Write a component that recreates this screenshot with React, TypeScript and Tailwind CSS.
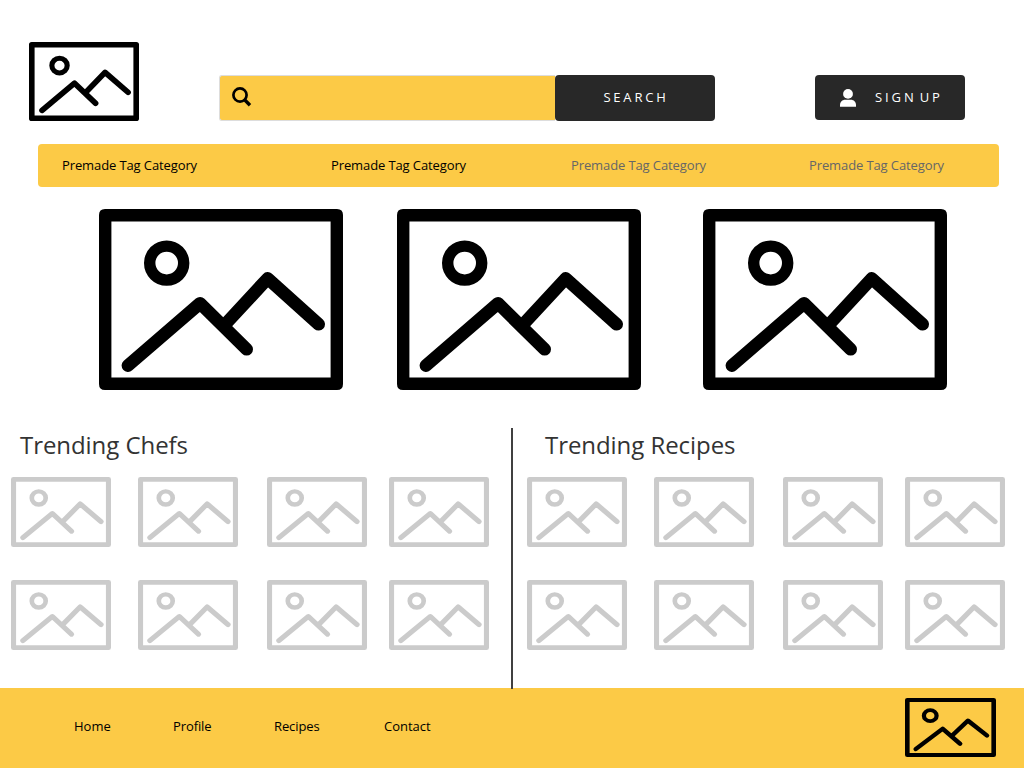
import React from "react";

function Picture({ className }: { className: string }) {
  return (
    <svg
      viewBox="0 0 244 181"
      preserveAspectRatio="none"
      fill="none"
      stroke="currentColor"
      className={className}
    >
      <path
        fill="currentColor"
        stroke="none"
        fillRule="evenodd"
        d="M6 0H238Q244 0 244 6V175Q244 181 238 181H6Q0 181 0 175V6Q0 0 6 0ZM12.4 12.6V168.4H231.6V12.6Z"
      />
      <circle cx="67.7" cy="54.1" r="17" strokeWidth="11.4" />
      <path
        d="M29 156.5L101 94.3L147.6 140.2M127 114.5L168.7 69.5L219.6 115.2"
        strokeWidth="12.8"
        strokeLinecap="round"
        strokeLinejoin="round"
      />
    </svg>
  );
}

function SearchIcon() {
  return (
    <svg viewBox="0 0 20 20" className="h-5 w-5" fill="none" stroke="#000">
      <circle cx="8" cy="8" r="6.6" strokeWidth="2.7" />
      <path d="M12.6 12.8L18 18.2" strokeWidth="3.4" />
    </svg>
  );
}

function UserIcon() {
  return (
    <svg viewBox="0 0 16 18" className="h-[18px] w-4" fill="#fff">
      <circle cx="8" cy="4.9" r="4.9" />
      <path d="M0 17.8V16.2C0 12.9 2.2 10.8 5.2 10.8H10.8C13.8 10.8 16 12.9 16 16.2V17.8Z" />
    </svg>
  );
}

function Trending({ title, className, titleClass }: { title: string; className: string; titleClass: string }) {
  return (
    <section className={className}>
      <h2 className={titleClass}>{title}</h2>
      <div className="mt-4 grid grid-cols-[127px_129px_122px_100px] gap-y-[33px] text-[#cbcbcb]">
        {Array.from({ length: 8 }, (_, i) => (
          <Picture key={i} className="h-[70px] w-[100px]" />
        ))}
      </div>
    </section>
  );
}

export default function App() {
  return (
    <div className="flex h-[768px] w-[1024px] flex-col overflow-hidden bg-white font-['Open_Sans',sans-serif] text-[13px] text-black">
      <header className="flex h-36 shrink-0 items-start">
        <Picture className="mt-[42px] ml-[29px] h-[79px] w-[110px]" />
        <div className="mt-[75px] ml-20 flex h-[46px]">
          <label className="flex w-[336px] items-start rounded-l-[3px] border border-r-0 border-[#dddddd] bg-[#fcca46] pt-[11px] pl-3">
            <SearchIcon />
          </label>
          <button className="w-40 rounded bg-[#282828] pl-[2px] text-[13px] tracking-[2.8px] text-white">
            SEARCH
          </button>
        </div>
        <button className="mt-[75px] ml-[100px] flex h-[45px] w-[150px] items-center rounded bg-[#282828] pl-[25px] text-[13px] text-white">
          <UserIcon />
          <span className="ml-[19px] tracking-[2.9px] [word-spacing:-3.2px]">SIGN UP</span>
        </button>
      </header>

      <nav className="mr-[25px] ml-[38px] grid h-[43px] shrink-0 grid-cols-[269px_240px_238px_auto] items-center rounded bg-[#fcca46] pl-6 tracking-[-0.11px]">
        <a>Premade Tag Category</a>
        <a>Premade Tag Category</a>
        <a className="text-[#666666]">Premade Tag Category</a>
        <a className="text-[#666666]">Premade Tag Category</a>
      </nav>

      <div className="mt-[22px] ml-[99px] flex shrink-0">
        <Picture className="h-[181px] w-[244px]" />
        <Picture className="ml-[54px] h-[181px] w-[244px]" />
        <Picture className="ml-[62px] h-[181px] w-[244px]" />
      </div>

      <main className="z-10 mt-[38px] -mb-px flex h-[261px] shrink-0">
        <Trending
          title="Trending Chefs"
          className="w-[511px] pl-[11px]"
          titleClass="pt-px pl-[9px] text-2xl leading-8 tracking-[-0.06px] text-[#333333]"
        />
        <div className="w-0.5 bg-[#404040]" />
        <Trending
          title="Trending Recipes"
          className="pl-3.5"
          titleClass="pt-px pl-[18px] text-2xl leading-8 tracking-[-0.06px] text-[#333333]"
        />
      </main>

      <footer className="flex h-20 shrink-0 items-start bg-[#fcca46]">
        <nav className="ml-[74px] grid h-[77px] w-[831px] grid-cols-[99px_101px_110px_auto] items-center">
          <a>Home</a>
          <a className="tracking-[-0.1px]">Profile</a>
          <a className="tracking-[-0.1px]">Recipes</a>
          <a>Contact</a>
        </nav>
        <Picture className="mt-2.5 h-[59px] w-[91px]" />
      </footer>
    </div>
  );
}
